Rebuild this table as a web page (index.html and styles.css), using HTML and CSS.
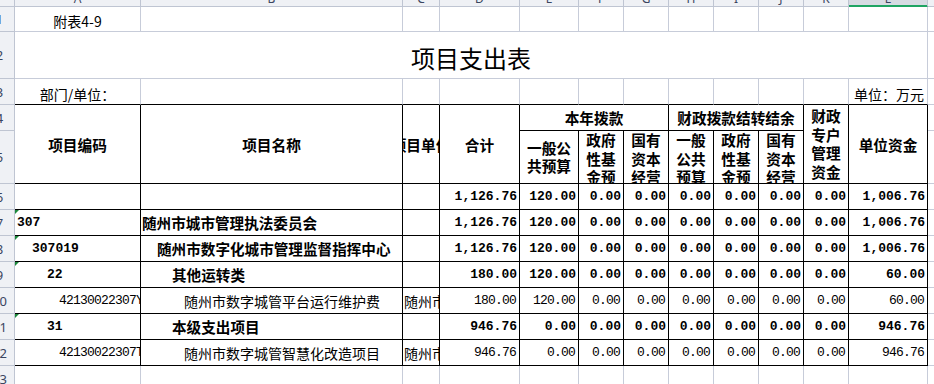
FILE: index.html
```html
<!DOCTYPE html>
<html lang="zh-CN">
<head>
<meta charset="utf-8">
<title>项目支出表</title>
<link rel="stylesheet" href="styles.css">
</head>
<body>
<div class="viewport">
<table class="sheet">
<colgroup>
<col class="w-rh"><col class="w-a"><col class="w-b"><col class="w-c"><col class="w-d"><col class="w-e">
<col class="w-s"><col class="w-s"><col class="w-s"><col class="w-s"><col class="w-s"><col class="w-s">
<col class="w-l"><col class="w-m">
</colgroup>
<thead>
<tr class="hdr">
<th class="corner"></th><th class="ch">A</th><th class="ch">B</th><th class="ch">C</th><th class="ch">D</th><th class="ch">E</th><th class="ch">F</th><th class="ch">G</th><th class="ch">H</th><th class="ch">I</th><th class="ch">J</th><th class="ch">K</th><th class="ch sel">L</th><th class="ch">M</th>
</tr>
</thead>
<tbody>
<tr class="r1">
<th class="rh">1</th><td class="note">附表4-9</td><td></td><td></td><td></td><td></td><td></td><td></td><td></td><td></td><td></td><td></td><td></td><td class="m"></td>
</tr>
<tr class="r2">
<th class="rh">2</th><td class="title" colspan="12">项目支出表</td><td class="m"></td>
</tr>
<tr class="r3">
<th class="rh">3</th><td class="note">部门/单位：</td><td></td><td></td><td></td><td></td><td></td><td></td><td></td><td></td><td></td><td></td><td class="unit">单位：万元</td><td class="m"></td>
</tr>
</tbody>
<tbody class="tbl">
<tr class="r4">
<th class="rh">4</th>
<td class="hd" rowspan="2">项目编码</td>
<td class="hd" rowspan="2">项目名称</td>
<td class="hd" rowspan="2"><div class="cc">项目单位</div></td>
<td class="hd" rowspan="2">合计</td>
<td class="hd" colspan="3">本年拨款</td>
<td class="hd" colspan="3">财政拨款结转结余</td>
<td class="hd wrap" rowspan="2">财政专户管理资金</td>
<td class="hd" rowspan="2">单位资金</td>
<td class="m"></td>
</tr>
<tr class="r5">
<th class="rh">5</th>
<td class="hd wrap">一般公共预算</td>
<td class="hd wrap top"><div class="box">政府性基金预算</div></td>
<td class="hd wrap top"><div class="box">国有资本经营预算</div></td>
<td class="hd wrap top"><div class="box">一般公共预算</div></td>
<td class="hd wrap top"><div class="box">政府性基金预算</div></td>
<td class="hd wrap top"><div class="box">国有资本经营预算</div></td>
<td class="m"></td>
</tr>
<tr class="rd">
<th class="rh">6</th><td></td><td></td><td></td>
<td class="num">1,126.76</td><td class="num">120.00</td><td class="num">0.00</td><td class="num">0.00</td><td class="num">0.00</td><td class="num">0.00</td><td class="num">0.00</td><td class="num">0.00</td><td class="num">1,006.76</td><td class="m"></td>
</tr>
<tr class="rd">
<th class="rh">7</th><td class="code tri i0">307</td><td class="name i0">随州市城市管理执法委员会</td><td></td>
<td class="num">1,126.76</td><td class="num">120.00</td><td class="num">0.00</td><td class="num">0.00</td><td class="num">0.00</td><td class="num">0.00</td><td class="num">0.00</td><td class="num">0.00</td><td class="num">1,006.76</td><td class="m"></td>
</tr>
<tr class="rd">
<th class="rh">8</th><td class="code tri i1">307019</td><td class="name i1">随州市数字化城市管理监督指挥中心</td><td></td>
<td class="num">1,126.76</td><td class="num">120.00</td><td class="num">0.00</td><td class="num">0.00</td><td class="num">0.00</td><td class="num">0.00</td><td class="num">0.00</td><td class="num">0.00</td><td class="num">1,006.76</td><td class="m"></td>
</tr>
<tr class="rd">
<th class="rh">9</th><td class="code tri i2">22</td><td class="name i2">其他运转类</td><td></td>
<td class="num">180.00</td><td class="num">120.00</td><td class="num">0.00</td><td class="num">0.00</td><td class="num">0.00</td><td class="num">0.00</td><td class="num">0.00</td><td class="num">0.00</td><td class="num">60.00</td><td class="m"></td>
</tr>
<tr class="rd rn">
<th class="rh">10</th><td class="code i3"><div class="clip">42130022307Y00000001</div></td><td class="name i3">随州市数字城管平台运行维护费</td><td class="unitname"><div class="clip">随州市数字化城市管理监督指挥中心</div></td>
<td class="num">180.00</td><td class="num">120.00</td><td class="num">0.00</td><td class="num">0.00</td><td class="num">0.00</td><td class="num">0.00</td><td class="num">0.00</td><td class="num">0.00</td><td class="num">60.00</td><td class="m"></td>
</tr>
<tr class="rd">
<th class="rh">11</th><td class="code tri i2">31</td><td class="name i2">本级支出项目</td><td></td>
<td class="num">946.76</td><td class="num">0.00</td><td class="num">0.00</td><td class="num">0.00</td><td class="num">0.00</td><td class="num">0.00</td><td class="num">0.00</td><td class="num">0.00</td><td class="num">946.76</td><td class="m"></td>
</tr>
<tr class="rd rn">
<th class="rh">12</th><td class="code i3"><div class="clip">42130022307T00000001</div></td><td class="name i3">随州市数字城管智慧化改造项目</td><td class="unitname"><div class="clip">随州市数字化城市管理监督指挥中心</div></td>
<td class="num">946.76</td><td class="num">0.00</td><td class="num">0.00</td><td class="num">0.00</td><td class="num">0.00</td><td class="num">0.00</td><td class="num">0.00</td><td class="num">0.00</td><td class="num">946.76</td><td class="m"></td>
</tr>
</tbody>
<tbody>
<tr class="rd">
<th class="rh">13</th><td></td><td></td><td></td><td></td><td></td><td></td><td></td><td></td><td></td><td></td><td></td><td></td><td class="m"></td>
</tr>
</tbody>
</table>
</div>
</body>
</html>
```

FILE: styles.css
```css
html, body {
  margin: 0;
  padding: 0;
  background: #ffffff;
}

.viewport {
  width: 934px;
  height: 384px;
  overflow: hidden;
}

.sheet {
  border-collapse: separate;
  border-spacing: 0;
  table-layout: fixed;
  width: 1044px;
  margin: -15px 0 0 -16px;
  font-family: "Noto Sans CJK SC", sans-serif;
  color: #000000;
}

.w-rh { width: 31px; }
.w-a { width: 126px; }
.w-b { width: 262px; }
.w-c { width: 37px; }
.w-d { width: 80px; }
.w-e { width: 59px; }
.w-s { width: 45px; }
.w-l { width: 79px; }
.w-m { width: 100px; }

.sheet td,
.sheet th {
  padding: 0;
  border: 0;
  border-right: 1px solid #c7ccd9;
  border-bottom: 1px solid #c7ccd9;
  overflow: hidden;
  white-space: nowrap;
  font-weight: normal;
  vertical-align: middle;
}

.hdr { height: 22px; }
.r1 { height: 25px; }
.r2 { height: 47px; }
.r3, .r4, .rd { height: 26px; }
.r5 { height: 53px; }

/* sheet chrome: column / row headers */
.corner,
.ch,
.rh {
  background: #eff1f5;
  color: #3a4560;
  font-family: "Noto Sans", sans-serif;
}

.sheet .corner,
.sheet .ch,
.sheet .rh {
  border-right-color: #bfc5d2;
  border-bottom-color: #bfc5d2;
}

.sheet .ch {
  font-size: 12px;
  line-height: 14px;
  text-align: center;
  vertical-align: bottom;
}

.sheet .ch.sel {
  background: #d7dbe3;
  border-bottom-color: #1fa463;
  box-shadow: inset 0 -1px 0 #1fa463;
}

.sheet .rh {
  font-size: 13px;
  text-align: center;
  padding-left: 1px;
}

/* top rows */
.sheet .note {
  font-size: 14px;
  text-align: center;
  vertical-align: bottom;
}

.sheet .title {
  font-size: 24px;
  text-align: center;
  padding-top: 4px;
}

.sheet .unit {
  font-size: 14px;
  text-align: right;
  padding-right: 3px;
  vertical-align: bottom;
}

.r3 td:not(.m) {
  border-bottom-color: #000000;
}

/* bordered table area */
.tbl td:not(.m) {
  border-right-color: #000000;
  border-bottom-color: #000000;
}

.sheet .hd {
  font-size: 14.67px;
  font-weight: bold;
  text-align: center;
}

.sheet .wrap {
  white-space: normal;
  line-height: 18.5px;
  padding: 0 2px;
}

.sheet .top {
  vertical-align: top;
}

.box {
  height: 52px;
  overflow: hidden;
}

.cc {
  display: flex;
  justify-content: center;
  overflow: hidden;
  white-space: nowrap;
}

/* data rows */
.sheet .num {
  font-family: "Liberation Mono", monospace;
  font-size: 13px;
  font-weight: bold;
  text-align: right;
  padding-right: 2px;
}

.sheet .code {
  font-family: "Liberation Mono", monospace;
  font-size: 13px;
  font-weight: bold;
}

.sheet .name {
  font-size: 14.6px;
  font-weight: bold;
}

.sheet .unitname {
  font-size: 14px;
  padding-left: 1px;
}

.sheet .rn .num,
.sheet .rn .code {
  font-size: 13px;
  letter-spacing: -0.8px;
  font-weight: normal;
}

.sheet .rn .num {
  padding-right: 3px;
}

.sheet .rn .name {
  font-size: 14px;
  font-weight: normal;
}

.sheet .code.i0 { padding-left: 2px; }
.sheet .code.i1 { padding-left: 17px; }
.sheet .code.i2 { padding-left: 32px; }
.sheet .code.i3 { padding-left: 44px; }

.sheet .name.i0 { padding-left: 1px; }
.sheet .name.i1 { padding-left: 16px; }
.sheet .name.i2 { padding-left: 31px; }
.sheet .name.i3 { padding-left: 43px; }

.clip {
  overflow: hidden;
  white-space: nowrap;
}

.tri {
  position: relative;
}

.tri::before {
  content: "";
  position: absolute;
  left: 0;
  top: 0;
  border-top: 4px solid #1d8a3c;
  border-right: 4px solid transparent;
}
```
